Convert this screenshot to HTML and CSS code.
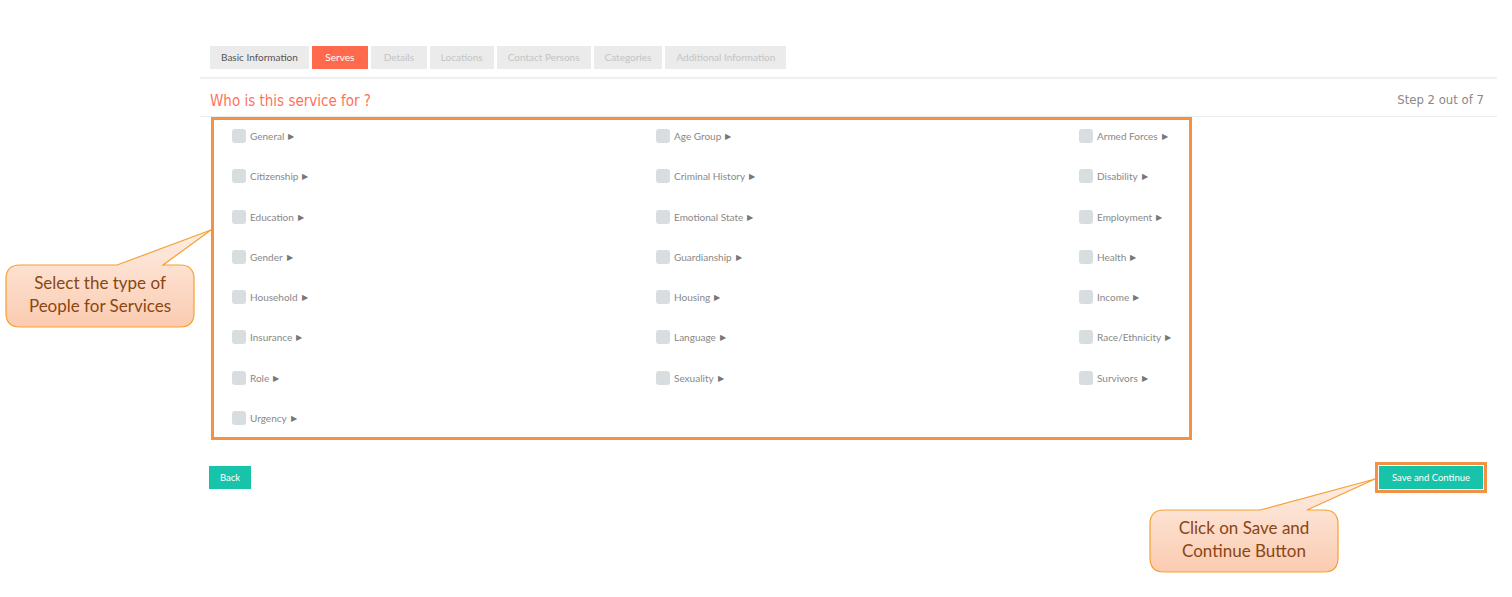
FILE: index.html
```html
<!DOCTYPE html>
<html lang="en">
<head>
    <meta charset="UTF-8">
    <meta name="viewport" content="width=device-width, initial-scale=1.0">
    <title>Serves</title>
    <link rel="stylesheet" href="styles.css">
</head>
<body>
    <div class="pagina">
        <div class="tabs">
            <span class="tab hecho">Basic Information</span>
            <span class="tab activo">Serves</span>
            <span class="tab">Details</span>
            <span class="tab">Locations</span>
            <span class="tab">Contact Persons</span>
            <span class="tab">Categories</span>
            <span class="tab">Additional Information</span>
        </div>
        <div class="titulo">
            <h2>Who is this service for ?</h2>
            <span class="paso">Step 2 out of 7</span>
        </div>
        <div class="opciones">
            <label class="opcion"><span class="check"></span>General <i>&#9654;</i></label>
            <label class="opcion"><span class="check"></span>Age Group <i>&#9654;</i></label>
            <label class="opcion"><span class="check"></span>Armed Forces <i>&#9654;</i></label>

            <label class="opcion"><span class="check"></span>Citizenship <i>&#9654;</i></label>
            <label class="opcion"><span class="check"></span>Criminal History <i>&#9654;</i></label>
            <label class="opcion"><span class="check"></span>Disability <i>&#9654;</i></label>

            <label class="opcion"><span class="check"></span>Education <i>&#9654;</i></label>
            <label class="opcion"><span class="check"></span>Emotional State <i>&#9654;</i></label>
            <label class="opcion"><span class="check"></span>Employment <i>&#9654;</i></label>

            <label class="opcion"><span class="check"></span>Gender <i>&#9654;</i></label>
            <label class="opcion"><span class="check"></span>Guardianship <i>&#9654;</i></label>
            <label class="opcion"><span class="check"></span>Health <i>&#9654;</i></label>

            <label class="opcion"><span class="check"></span>Household <i>&#9654;</i></label>
            <label class="opcion"><span class="check"></span>Housing <i>&#9654;</i></label>
            <label class="opcion"><span class="check"></span>Income <i>&#9654;</i></label>

            <label class="opcion"><span class="check"></span>Insurance <i>&#9654;</i></label>
            <label class="opcion"><span class="check"></span>Language <i>&#9654;</i></label>
            <label class="opcion"><span class="check"></span>Race/Ethnicity <i>&#9654;</i></label>

            <label class="opcion"><span class="check"></span>Role <i>&#9654;</i></label>
            <label class="opcion"><span class="check"></span>Sexuality <i>&#9654;</i></label>
            <label class="opcion"><span class="check"></span>Survivors <i>&#9654;</i></label>

            <label class="opcion"><span class="check"></span>Urgency <i>&#9654;</i></label>
        </div>
        <div class="acciones">
            <button class="boton">Back</button>
            <div class="resaltado">
                <button class="boton">Save and Continue</button>
            </div>
        </div>
    </div>

    <!-- globos de ayuda -->
    <svg class="globos" width="1512" height="597" viewBox="0 0 1512 597">
        <defs>
            <linearGradient id="relleno" x1="0" y1="0" x2="0" y2="1">
                <stop offset="0" stop-color="#fdeee5"/>
                <stop offset="1" stop-color="#fbcbb0"/>
            </linearGradient>
        </defs>
        <path d="M20,265 H117 L211,230 L163,265 H180 Q194,265 194,279 V313 Q194,327 180,327 H20 Q6,327 6,313 V279 Q6,265 20,265 Z"
              fill="url(#relleno)" stroke="#f7a030" stroke-width="1.2"/>
        <path d="M1164,510 H1260 L1375,479 L1307,510 H1324 Q1338,510 1338,524 V558 Q1338,572 1324,572 H1164 Q1150,572 1150,558 V524 Q1150,510 1164,510 Z"
              fill="url(#relleno)" stroke="#f7a030" stroke-width="1.2"/>
    </svg>
    <div class="globo-texto izquierda">Select the type of<br>People for Services</div>
    <div class="globo-texto derecha">Click on Save and<br>Continue Button</div>
</body>
</html>
```

FILE: styles.css
```css
body {
    margin: 0;
    position: relative;
    width: 1512px;
    height: 597px;
    background: #fff;
    font-family: Lato, "Open Sans", sans-serif;
    overflow: hidden;
}
.pagina {
    margin-left: 200px;
    width: 1297px;
}
.tabs {
    display: flex;
    gap: 3px;
    padding: 46px 0 8px 10px;
    border-bottom: 2px solid #edf1f4;
}
.tab {
    min-width: 34px;
    height: 23px;
    line-height: 23px;
    padding: 0 11px;
    text-align: center;
    background: #ebebeb;
    color: #c4c4c4;
    font-size: 10px;
}
.tab.hecho {
    color: #555;
}
.tab.activo {
    background: #ff6a4d;
    color: #fff;
}
.titulo {
    display: flex;
    justify-content: space-between;
    height: 38px;
    box-sizing: border-box;
    padding: 12px 13px 0 10px;
    border-bottom: 1px solid #e8ecef;
}
.titulo h2 {
    margin: 0;
    font-family: "Liberation Sans Narrow", "DejaVu Sans Condensed", sans-serif;
    font-weight: normal;
    font-size: 15px;
    line-height: 20px;
    color: #ff7259;
}
.paso {
    font-family: "Liberation Sans Narrow", "DejaVu Sans Condensed", sans-serif;
    font-size: 13px;
    line-height: 18px;
    color: #888;
}
.opciones {
    margin-left: 11px;
    width: 981px;
    height: 323px;
    box-sizing: border-box;
    border: 3px solid #f39145;
    padding: 1px 18px 4px;
    display: grid;
    grid-template-columns: 424px 423px auto;
    grid-auto-rows: 30px;
    row-gap: 10.3px;
}
.opcion {
    display: flex;
    align-items: center;
    font-size: 10px;
    color: #888;
}
.check {
    width: 14px;
    height: 14px;
    border-radius: 3px;
    background: #d8dde0;
    margin-right: 4px;
}
.opcion i {
    font-style: normal;
    font-size: 8px;
    color: #777;
    margin-left: 4px;
}
.acciones {
    display: flex;
    justify-content: space-between;
    align-items: center;
    margin-top: 22px;
    padding: 0 10px 0 9px;
}
.boton {
    height: 23px;
    padding: 0 11px;
    border: none;
    background: #17c4a9;
    color: #fff;
    font-family: Lato, "Open Sans", sans-serif;
    font-size: 9.5px;
    cursor: pointer;
}
.resaltado {
    border: 3px solid #f39145;
    padding: 1px;
    display: flex;
}
.resaltado .boton {
    width: 104px;
    padding: 0;
}
.globos {
    position: absolute;
    left: 0;
    top: 0;
    pointer-events: none;
}
.globo-texto {
    position: absolute;
    width: 188px;
    text-align: center;
    font-family: Lato, "Open Sans", sans-serif;
    font-size: 17px;
    line-height: 23px;
    color: #8a4612;
}
.globo-texto.izquierda {
    left: 6px;
    top: 271px;
}
.globo-texto.derecha {
    left: 1150px;
    top: 516px;
}
```
